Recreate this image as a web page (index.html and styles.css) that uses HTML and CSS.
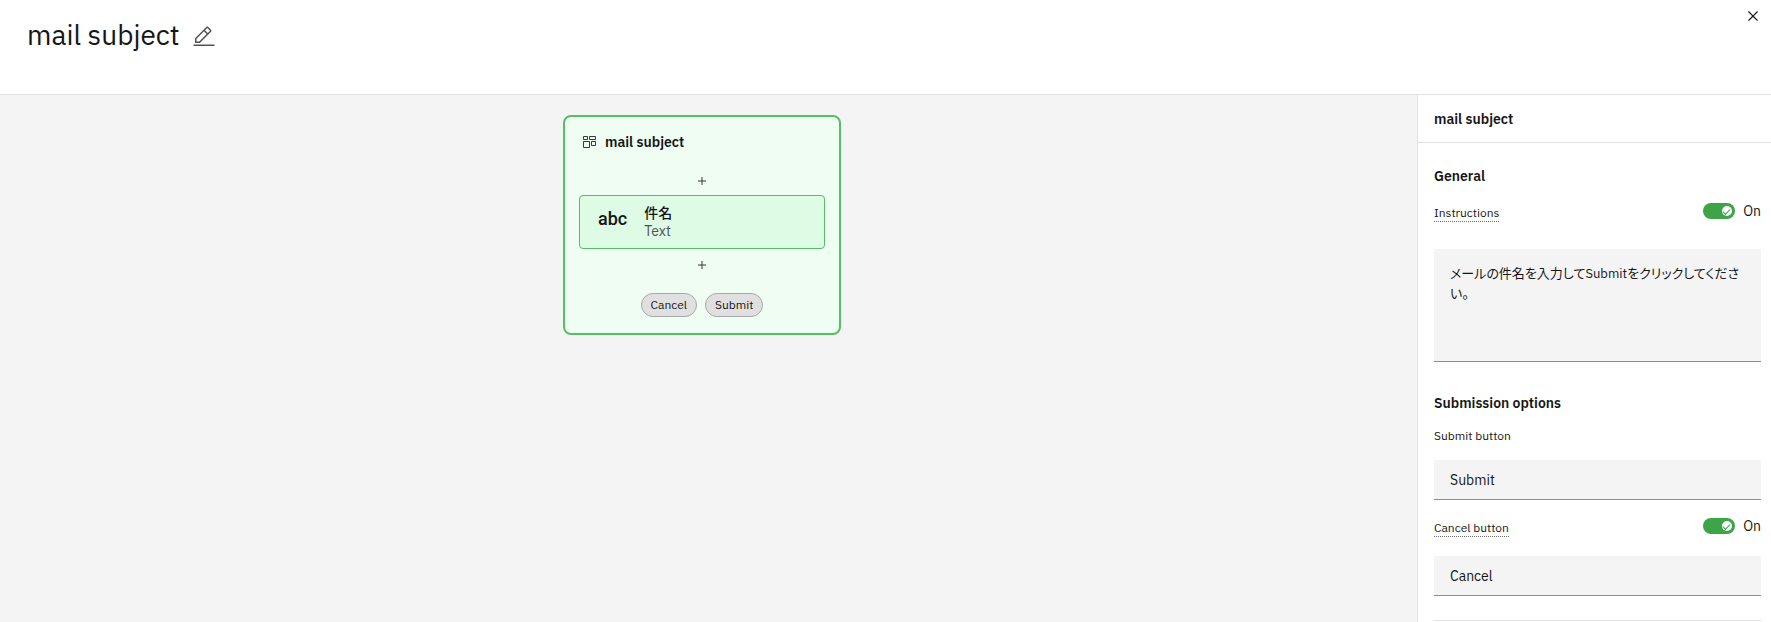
FILE: index.html
```html
<!DOCTYPE html>
<html lang="en">
<head>
    <meta charset="UTF-8">
    <meta name="viewport" content="width=device-width, initial-scale=1.0">
    <title>mail subject</title>
    <link rel="stylesheet" href="styles.css">
</head>
<body>
    <header class="header">
        <h1 class="title">mail subject</h1>
        <button class="icon-btn" type="button" aria-label="Edit name">
            <svg width="24" height="24" viewBox="0 0 32 32" fill="#525252">
                <path d="M2 26h28v2H2zM25.4 9c.8-.8.8-2 0-2.8l-3.600-3.600c-.8-.8-2-.8-2.800 0l-15 15V24h6.400l15-15zm-5-5L24 7.600l-3 3L17.400 7l3-3zM6 22v-3.600l10-10 3.600 3.600-10 10H6z"/>
            </svg>
        </button>
        <button class="icon-btn close" type="button" aria-label="Close">
            <svg width="20" height="20" viewBox="0 0 32 32" fill="#161616">
                <path d="M24 9.400L22.600 8 16 14.600 9.400 8 8 9.400l6.600 6.600L8 22.600 9.400 24l6.600-6.600 6.600 6.600 1.400-1.400-6.600-6.600L24 9.400z"/>
            </svg>
        </button>
    </header>

    <div class="layout">
        <main class="canvas">
            <section class="card">
                <div class="card-head">
                    <svg width="14" height="14" viewBox="0 0 14 14" fill="none" stroke="#393939">
                        <path d="M.5 1.500h4v3h-4zM6.500 1.500h6v3h-6zM.5 6.500h6v6h-6zM8.500 6.500h4v4h-4z"/>
                    </svg>
                    <h2 class="heading">mail subject</h2>
                </div>
                <button class="add" type="button" aria-label="Add field above">
                    <svg width="8" height="8" viewBox="0 0 8 8" stroke="#393939"><path d="M4 0v8M0 4h8"/></svg>
                </button>
                <div class="field">
                    <span class="abc">abc</span>
                    <div>
                        <div class="field-name" lang="ja">件名</div>
                        <div class="field-type">Text</div>
                    </div>
                </div>
                <button class="add" type="button" aria-label="Add field below">
                    <svg width="8" height="8" viewBox="0 0 8 8" stroke="#393939"><path d="M4 0v8M0 4h8"/></svg>
                </button>
                <div class="chips">
                    <button class="chip" type="button">Cancel</button>
                    <button class="chip" type="button">Submit</button>
                </div>
            </section>
        </main>

        <aside class="panel">
            <h2 class="heading panel-head">mail subject</h2>
            <div class="panel-body">
                <h3 class="heading">General</h3>
                <div class="row">
                    <label class="label dotted" for="instructions">Instructions</label>
                    <label class="toggle"><input type="checkbox" checked>On</label>
                </div>
                <textarea class="input area" id="instructions" lang="ja">メールの件名を入力してSubmitをクリックしてください。</textarea>

                <h3 class="heading">Submission options</h3>
                <label class="label submit-label" for="submit">Submit button</label>
                <input class="input" id="submit" type="text" value="Submit">
                <div class="row">
                    <label class="label dotted" for="cancel">Cancel button</label>
                    <label class="toggle"><input type="checkbox" checked>On</label>
                </div>
                <input class="input" id="cancel" type="text" value="Cancel">
                <hr class="divider">
            </div>
        </aside>
    </div>
</body>
</html>
```
FILE: styles.css
```css
* {
    box-sizing: border-box;
}
body {
    margin: 0;
    height: 100vh;
    display: flex;
    flex-direction: column;
    overflow: hidden;
    background: #fff;
    color: #161616;
    font-family: 'IBM Plex Sans', 'Open Sans', 'Noto Sans CJK JP', sans-serif;
    font-size: 14px;
    line-height: 18px;
}
button {
    font: inherit;
    color: inherit;
    cursor: pointer;
}
h1, h2, h3 {
    margin: 0;
}
svg {
    display: block;
}

/* header */
.header {
    display: flex;
    align-items: flex-start;
    padding: 16px 8px 40px 27px;
    border-bottom: 1px solid #e0e0e0;
}
.title {
    font-size: 28px;
    font-weight: 400;
    line-height: 38px;
}
.icon-btn {
    margin: 9px 0 0 12px;
    padding: 0;
    border: 0;
    background: none;
}
.close {
    margin: -10px 0 0 auto;
}

/* canvas */
.layout {
    flex: 1;
    min-height: 0;
    display: flex;
}
.canvas {
    flex: 1;
    display: flex;
    justify-content: center;
    align-items: flex-start;
    padding: 20px 13px 0 0;
    background: #f4f4f4;
}
.card {
    width: 278px;
    padding: 16px 14px;
    border: 2px solid #56bf66;
    border-radius: 8px;
    background: #effdf3;
}
.card-head {
    display: flex;
    align-items: center;
    gap: 8px;
    padding-left: 4px;
    margin-bottom: 23px;
}
.heading {
    font-size: 14px;
    font-weight: 600;
    line-height: 18px;
}
.add {
    display: flex;
    width: 100%;
    height: 14px;
    padding: 0;
    border: 0;
    background: none;
    align-items: center;
    justify-content: center;
}
.field {
    display: flex;
    gap: 17px;
    height: 54px;
    margin: 7px 0 9px;
    padding: 8px 18px;
    border: 1px solid #56bf66;
    border-radius: 4px;
    background: #defbe6;
}
.abc {
    padding-top: 6px;
    font-family: Roboto, sans-serif;
    font-size: 18px;
    font-weight: 500;
    line-height: 18px;
}
.field-name {
    font-weight: 500;
}
.field-type {
    color: #525252;
}
.chips {
    display: flex;
    justify-content: center;
    gap: 8px;
    margin-top: 21px;
}
.chip {
    height: 24px;
    padding: 0 9px;
    border: 1px solid #a8a8a8;
    border-radius: 12px;
    background: #e0e0e0;
    font-size: 12px;
    line-height: 16px;
}

/* side panel */
.panel {
    width: 354px;
    border-left: 1px solid #e0e0e0;
    background: #fff;
}
.panel-head {
    padding: 15px 16px 14px;
    border-bottom: 1px solid #e0e0e0;
}
.panel-body {
    padding: 24px 10px 0 16px;
}
.row {
    display: flex;
    justify-content: space-between;
    align-items: flex-start;
    padding: 17px 0 3px;
}
.label {
    font-size: 12px;
    line-height: 16px;
}
.dotted {
    margin-top: 3px;
    border-bottom: 1px dotted #6f6f6f;
}
.toggle {
    display: flex;
    gap: 8px;
}
.toggle input {
    appearance: none;
    position: relative;
    width: 32px;
    height: 16px;
    margin: 1px 0 0;
    border-radius: 8px;
    background: #3da447;
}
.toggle input::before {
    content: '';
    position: absolute;
    top: 3px;
    right: 3px;
    width: 10px;
    height: 10px;
    border-radius: 50%;
    background: #fff;
}
.toggle input::after {
    content: '';
    position: absolute;
    top: 6px;
    right: 5px;
    width: 6px;
    height: 3px;
    border: solid #3da447;
    border-width: 0 0 1px 1px;
    transform: rotate(-45deg);
}
.input {
    display: block;
    width: 100%;
    height: 40px;
    margin-top: 16px;
    padding: 0 16px;
    border: 0;
    border-bottom: 1px solid #8d8d8d;
    border-radius: 0;
    background: #f4f4f4;
    color: #161616;
    font: inherit;
}
.area {
    height: 113px;
    margin: 24px 0 32px;
    padding: 15px 10px 14px 16px;
    font-size: 13px;
    line-height: 20px;
    font-feature-settings: 'palt';
    resize: none;
}
.submit-label {
    display: block;
    margin-top: 16px;
}
.divider {
    margin: 24px 0 0;
    border: 0;
    border-top: 1px solid #e0e0e0;
}
```
